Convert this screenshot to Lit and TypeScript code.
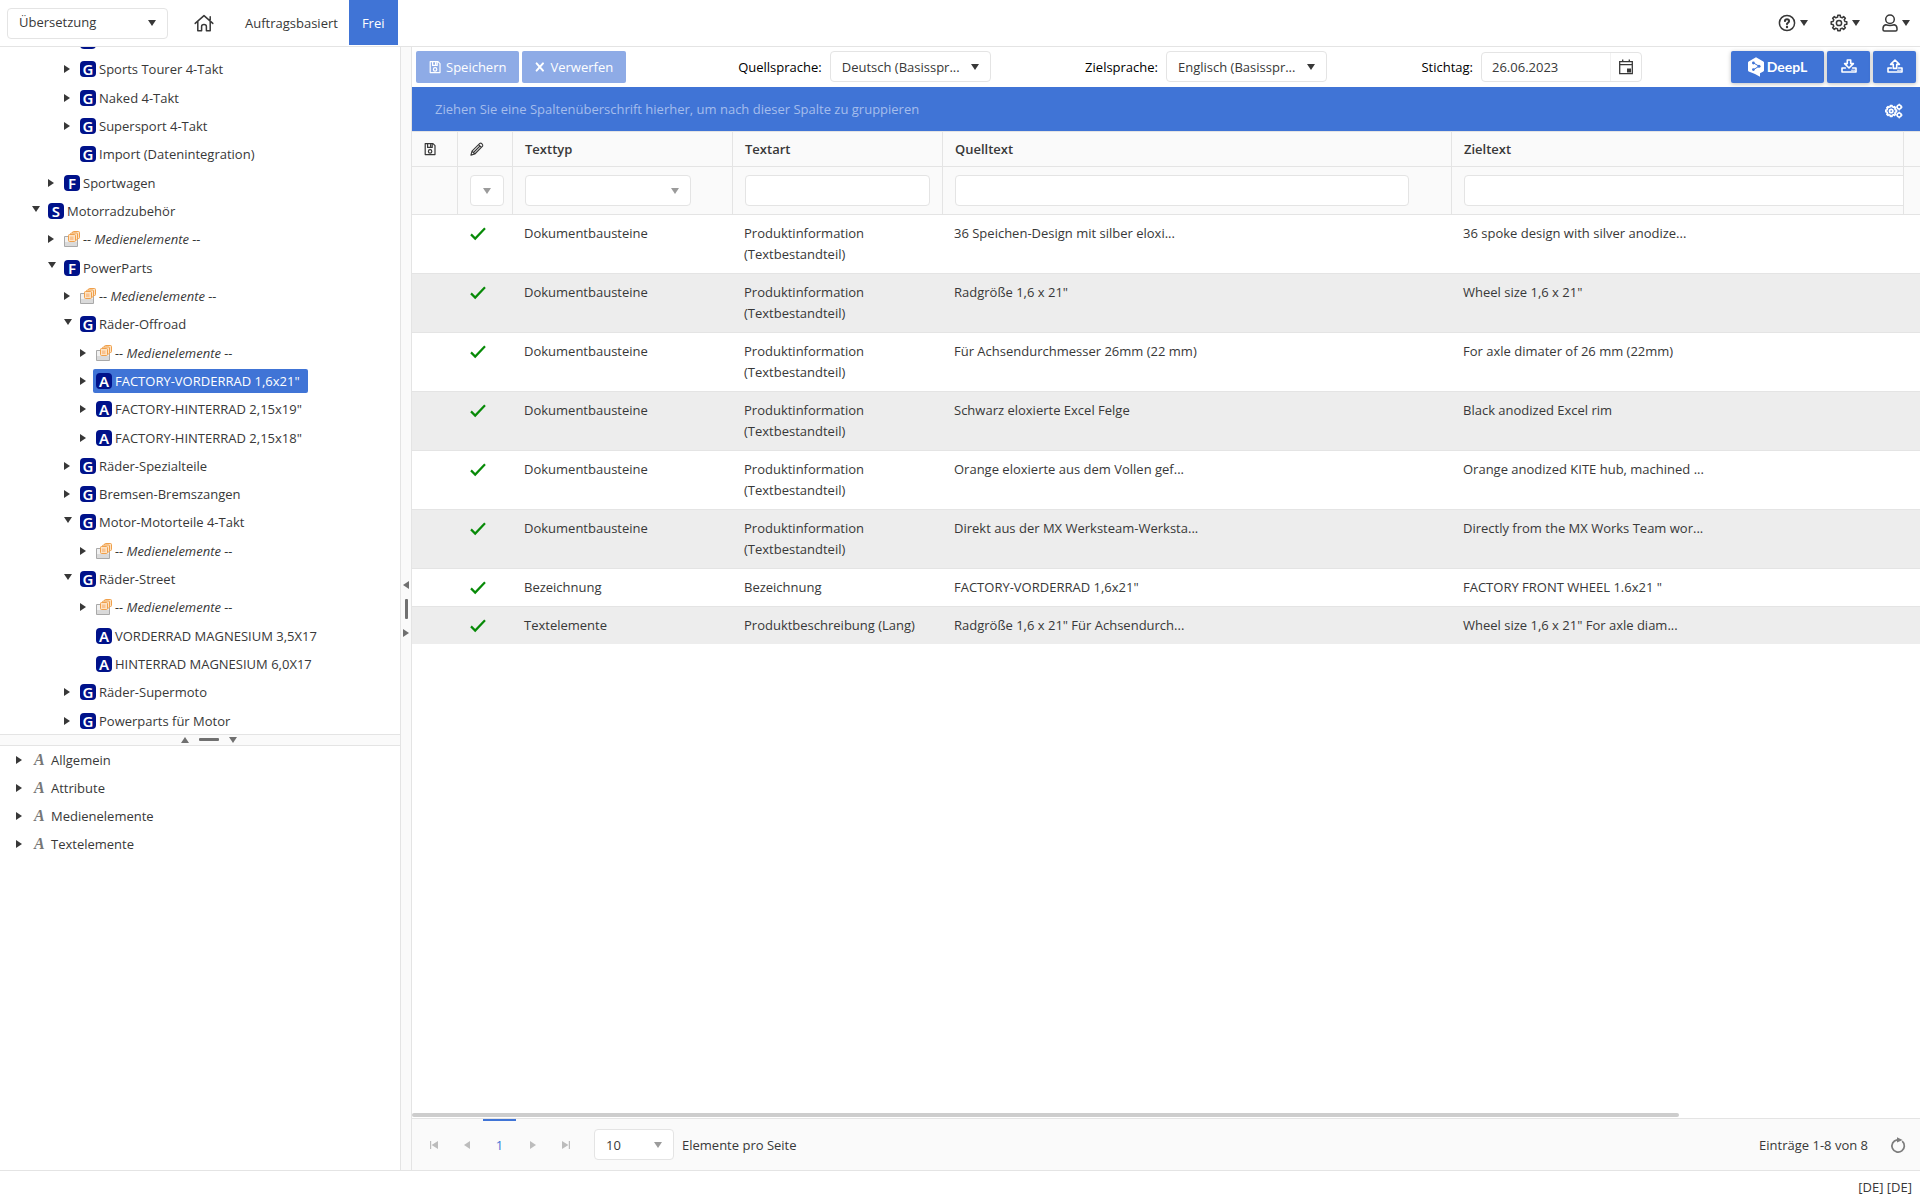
import { LitElement, html, css, svg, nothing } from 'lit';
import { customElement, property } from 'lit/decorators.js';
import { classMap } from 'lit/directives/class-map.js';
import { styleMap } from 'lit/directives/style-map.js';

type Kind = 'G' | 'F' | 'S' | 'A' | 'media' | '';
interface TreeNode {
  level: number;
  kind: Kind;
  label: string;
  open?: boolean;
  leaf?: boolean;
  selected?: boolean;
}

const MEDIA = '-- Medienelemente --';

const TREE: TreeNode[] = [
  { level: 3, kind: '', label: '', leaf: true },
  { level: 3, kind: 'G', label: 'Sports Tourer 4-Takt' },
  { level: 3, kind: 'G', label: 'Naked 4-Takt' },
  { level: 3, kind: 'G', label: 'Supersport 4-Takt' },
  { level: 3, kind: 'G', label: 'Import (Datenintegration)', leaf: true },
  { level: 2, kind: 'F', label: 'Sportwagen' },
  { level: 1, kind: 'S', label: 'Motorradzubehör', open: true },
  { level: 2, kind: 'media', label: MEDIA },
  { level: 2, kind: 'F', label: 'PowerParts', open: true },
  { level: 3, kind: 'media', label: MEDIA },
  { level: 3, kind: 'G', label: 'Räder-Offroad', open: true },
  { level: 4, kind: 'media', label: MEDIA },
  { level: 4, kind: 'A', label: 'FACTORY-VORDERRAD 1,6x21"', selected: true },
  { level: 4, kind: 'A', label: 'FACTORY-HINTERRAD 2,15x19"' },
  { level: 4, kind: 'A', label: 'FACTORY-HINTERRAD 2,15x18"' },
  { level: 3, kind: 'G', label: 'Räder-Spezialteile' },
  { level: 3, kind: 'G', label: 'Bremsen-Bremszangen' },
  { level: 3, kind: 'G', label: 'Motor-Motorteile 4-Takt', open: true },
  { level: 4, kind: 'media', label: MEDIA },
  { level: 3, kind: 'G', label: 'Räder-Street', open: true },
  { level: 4, kind: 'media', label: MEDIA },
  { level: 4, kind: 'A', label: 'VORDERRAD MAGNESIUM 3,5X17', leaf: true },
  { level: 4, kind: 'A', label: 'HINTERRAD MAGNESIUM 6,0X17', leaf: true },
  { level: 3, kind: 'G', label: 'Räder-Supermoto' },
  { level: 3, kind: 'G', label: 'Powerparts für Motor' },
];

const SECTIONS = ['Allgemein', 'Attribute', 'Medienelemente', 'Textelemente'];

const DOC = 'Dokumentbausteine';
const INFO = 'Produktinformation (Textbestandteil)';
const ROWS: [string, string, string, string][] = [
  [DOC, INFO, '36 Speichen-Design mit silber eloxi...', '36 spoke design with silver anodize...'],
  [DOC, INFO, 'Radgröße 1,6 x 21"', 'Wheel size 1,6 x 21"'],
  [DOC, INFO, 'Für Achsendurchmesser 26mm (22 mm)', 'For axle dimater of 26 mm (22mm)'],
  [DOC, INFO, 'Schwarz eloxierte Excel Felge', 'Black anodized Excel rim'],
  [DOC, INFO, 'Orange eloxierte aus dem Vollen gef...', 'Orange anodized KITE hub, machined ...'],
  [DOC, INFO, 'Direkt aus der MX Werksteam-Werksta...', 'Directly from the MX Works Team wor...'],
  ['Bezeichnung', 'Bezeichnung', 'FACTORY-VORDERRAD 1,6x21"', 'FACTORY FRONT WHEEL 1.6x21 "'],
  ['Textelemente', 'Produktbeschreibung (Lang)', 'Radgröße 1,6 x 21" Für Achsendurch...', 'Wheel size 1,6 x 21" For axle diam...'],
];

function gearPath(cx: number, cy: number, outer: number, inner: number, teeth: number) {
  const pts: string[] = [];
  const step = (Math.PI * 2) / teeth;
  for (let i = 0; i < teeth; i++) {
    const a = i * step;
    const put = (ang: number, r: number) =>
      pts.push(`${(cx + Math.sin(ang) * r).toFixed(2)} ${(cy - Math.cos(ang) * r).toFixed(2)}`);
    put(a - step * 0.3, inner);
    put(a - step * 0.2, outer);
    put(a + step * 0.2, outer);
    put(a + step * 0.3, inner);
  }
  return `M${pts.join('L')}Z`;
}

const line = (w: number, body: unknown) =>
  svg`<g fill="none" stroke="currentColor" stroke-width=${w} stroke-linejoin="round" stroke-linecap="round">${body}</g>`;

const ICONS: Record<string, { w: number; h: number; body: unknown }> = {
  home: {
    w: 20, h: 18,
    body: line(1.5, svg`<path d="M1.2 9.4 10 1.6l8.800 7.800M3.800 7.600v9.200h3.800v-4.200q0-2.100 2.400-2.100t2.400 2.100v4.200h3.800V7.600M16.200 6V2.800"/>`),
  },
  help: {
    w: 18, h: 18,
    body: svg`${line(1.5, svg`<circle cx="9" cy="9" r="7.600"/>`)}${line(2, svg`<path d="M6.900 7.100Q7 5.200 9 5.200t2.100 1.800Q11.100 8.200 9.900 8.800T9 10.200"/>`)}<circle cx="9" cy="13" r="1.200" fill="currentColor"/>`,
  },
  gear: {
    w: 18, h: 18,
    body: line(1.5, svg`<path d=${gearPath(9, 9, 7.9, 6.1, 8)}/><circle cx="9" cy="9" r="2.600"/>`),
  },
  user: {
    w: 16, h: 18,
    body: line(1.5, svg`<circle cx="8" cy="5.300" r="4.300"/><path d="M3.800 10.800Q1 11.400 1 14.600V15.800Q1 17 2.400 17H13.600Q15 17 15 15.800V14.600Q15 11.400 12.200 10.800Q8 12.200 3.800 10.800Z"/>`),
  },
  save: {
    w: 12, h: 14,
    body: line(1.2, svg`<path d="M1.200 1.600H9L11 3.600V12.600H1.200Z"/><path d="M3.600 1.600V5.400H8.200V1.600M6.600 2.600V4.200"/><circle cx="6.100" cy="9.400" r="1.700"/>`),
  },
  close: { w: 10, h: 10, body: line(2, svg`<path d="M1.600 1.400 8 8.600M8 1.400 1.600 8.600"/>`) },
  pencil: {
    w: 14, h: 14,
    body: line(1.1, svg`<path d="M.9 13.100 2 9.200 9.800 1.400Q10.800.600 12 1.800T12.600 4.200L4.800 12ZM2 9.200 4.800 12M8.600 2.600 11.400 5.400M4 10 10 4"/>`),
  },
  check: {
    w: 16, h: 13,
    body: svg`<path d="M1 7.400 5.200 11.600 15 1.200" fill="none" stroke="currentColor" stroke-width="2.200"/>`,
  },
  calendar: {
    w: 16, h: 16,
    body: svg`<path d="M1.700 2.700H14.300V14.700H1.700ZM1.700 5.700H14.300M4.700.500V3M11.300.500V3" fill="none" stroke="currentColor" stroke-width="1.300"/><path d="M9 9.500h4v4H9z" fill="currentColor"/>`,
  },
  download: {
    w: 16, h: 14,
    body: line(1.6, svg`<path d="M6.300 1H9.700V4.600H12.400L8 9 3.600 4.600H6.300ZM4.400 9H1V13H15V9H11.600M11 11.200h.1M13 11.200h.1"/>`),
  },
  upload: {
    w: 16, h: 14,
    body: line(1.6, svg`<path d="M6.300 9.400H9.700V5.400H12.400L8 1 3.600 5.400H6.300ZM4.400 9H1V13H15V9H11.600M11 11.200h.1M13 11.200h.1"/>`),
  },
  gears: {
    w: 18, h: 16,
    body: svg`${line(1.7, svg`<path d=${gearPath(6.2, 8, 5.4, 4.3, 8)}/><circle cx="6.200" cy="8" r="1.700"/>`)}${line(1.6, svg`<circle cx="14.200" cy="4" r="2"/><circle cx="14.200" cy="12" r="2"/>`)}${line(1.2, svg`<path d="M14.200 1v1M14.200 6v1M11.200 4h1M16.200 4h1M14.200 9v1M14.200 14v1M11.200 12h1M16.200 12h1"/>`)}`,
  },
  deepl: {
    w: 16, h: 20,
    body: svg`<path d="M8 .300 15.300 4.400Q16 4.800 16 5.600V13.200Q16 14 15.300 14.400L12 16.300V19.800L7 17 .700 14.400Q0 14 0 13.200V5.600Q0 4.800.700 4.400Z" fill="#fff"/><path d="M5.600 6 11 9.200 5.600 12.600" fill="none" stroke="#4074d6" stroke-width="1"/><g fill="#4074d6"><circle cx="5.400" cy="6" r="1.400"/><circle cx="11" cy="9.200" r="1.500"/><circle cx="5.400" cy="12.600" r="1.400"/></g>`,
  },
  refresh: {
    w: 16, h: 16,
    body: svg`<path d="M12.200 4.200A6.200 6.200 0 1 1 7 2.800" fill="none" stroke="currentColor" stroke-width="1.700"/><path d="M7 .200 12.600 2.900 7 5.600Z" fill="currentColor"/>`,
  },
  first: { w: 8, h: 8, body: svg`<path d="M0 0H1.200V8H0ZM8 0V8L1.600 4Z" fill="currentColor"/>` },
  last: { w: 8, h: 8, body: svg`<path d="M6.800 0H8V8H6.800ZM0 0V8L6.400 4Z" fill="currentColor"/>` },
  left: { w: 6, h: 8, body: svg`<path d="M6 0V8L0 4Z" fill="currentColor"/>` },
  right: { w: 6, h: 8, body: svg`<path d="M0 0V8L6 4Z" fill="currentColor"/>` },
  up: { w: 8, h: 6, body: svg`<path d="M0 6H8L4 0Z" fill="currentColor"/>` },
  down: { w: 8, h: 6, body: svg`<path d="M0 0H8L4 6Z" fill="currentColor"/>` },
  media: {
    w: 16, h: 16,
    body: svg`<path d="M.5 5.500H13.500V15.500H.5Z" fill="#f1f1f1" stroke="#a9a9a9"/><path d="M1 11h12v4H1z" fill="#dadada"/><g stroke="#f0a04b" fill="#fde3c4"><rect x="8.500" y=".5" width="7" height="7" rx="1"/><rect x="6.500" y="2" width="7" height="7" rx="1"/><rect x="4.500" y="3.500" width="7" height="7" rx="1"/></g><path d="M6 5.500h3.500v3.500H6z" fill="#f9c391"/>`,
  },
};

@customElement('ui-icon')
class UiIcon extends LitElement {
  @property() name = '';
  static styles = css`
    :host { display: inline-flex; flex: none; }
    svg { display: block; overflow: visible; }
  `;
  render() {
    const i = ICONS[this.name];
    return i
      ? html`<svg width=${i.w} height=${i.h} viewBox="0 0 ${i.w} ${i.h}" aria-hidden="true">${i.body}</svg>`
      : nothing;
  }
}

@customElement('app-root')
class AppRoot extends LitElement {
  static styles = css`
    :host {
      display: block;
      color: #383838;
      font: 13px/20px 'Open Sans', 'Noto Sans', sans-serif;
      --blue: #4074d6;
      --line: #e4e4e4;
      --soft: #fafafa;
    }
    * { box-sizing: border-box; }
    button, select, input { font: inherit; color: inherit; margin: 0; }
    button { border: 0; padding: 0; background: none; display: inline-flex; align-items: center; justify-content: center; }
    ul { list-style: none; margin: 0; padding: 0; }
    .app { display: grid; grid-template-rows: 46px 1fr 29px; height: 100vh; background: #fff; overflow: hidden; }

    .top { display: flex; align-items: center; padding: 0 10px 0 7px; }
    .top > .drop select { padding-bottom: 2px; }
    .tabs { display: flex; align-self: stretch; align-items: center; margin-left: 26px; height: 45px; }
    .tabs a { color: inherit; text-decoration: none; display: flex; align-items: center; height: 45px; }
    .tabs .link { padding: 0 11px 0 31px; }
    .tabs .active { background: var(--blue); color: #fff; padding: 0 13px; }
    .tools { display: flex; gap: 22px; margin-left: auto; }
    .tools button { gap: 4px; height: 30px; }

    .drop { display: inline-grid; align-items: center; }
    .drop > * { grid-area: 1 / 1; }
    .drop select { appearance: none; border: 1px solid var(--line); border-radius: 4px; background: #fff; height: 31px; width: 100%; padding: 0 28px 0 11px; }
    .drop ui-icon { justify-self: end; margin-right: 12px; pointer-events: none; }
    .wide { width: 161px; }
    .grey ui-icon { color: #9b9b9b; }

    .body { display: grid; grid-template-columns: 400px 12px minmax(0, 1fr); min-height: 0; border: solid var(--line); border-width: 1px 0; }
    .side { display: grid; grid-template-rows: minmax(0, 34fr) 12px minmax(0, 21fr); min-height: 0; }
    .split { background: var(--soft); color: #707070; display: flex; align-items: center; justify-content: center; border: solid var(--line); }
    .split.col { flex-direction: column; gap: 10px; border-width: 0 1px; }
    .split.row { gap: 10px; border-width: 1px 0; padding-left: 18px; }
    .grip { border-radius: 1px; background: #707070; }
    .split.col .grip { width: 3px; height: 20px; }
    .split.row .grip { width: 20px; height: 3px; }

    .treebox { overflow: hidden; }
    .tree { display: grid; grid-auto-rows: 1fr; height: calc(100% + 21px); margin-top: -20px; }
    .node { display: flex; align-items: center; }
    .toggle { width: 16px; height: 20px; flex: none; justify-content: flex-start; }
    .toggle.open { padding-bottom: 5px; }
    .item { display: flex; align-items: center; gap: 3px; height: 24px; padding: 0 8px 0 3px; margin-left: -3px; border-radius: 2px; }
    .item.selected { background: var(--blue); color: #fff; }
    .badge { width: 16px; height: 16px; border-radius: 4px; background: #00128a; color: #fff; font: 600 15px/16px 'Noto Sans', sans-serif; text-align: center; }
    .media { font-style: italic; }
    .attrs .node { height: 28px; padding-left: 16px; }
    .attrs .toggle { width: 18px; }
    .glyph { font: italic bold 16px/16px 'Liberation Serif', serif; color: #777; width: 14px; }

    .main { display: grid; grid-template-rows: 40px 44px minmax(0, 1fr) 5px 52px; min-width: 0; min-height: 0; }
    .bar { display: flex; padding: 4px 4px 0; gap: 3px; align-items: flex-start; }
    .btn { height: 32px; background: var(--blue); color: #fff; border-radius: 2px; gap: 5px; box-shadow: 0 1px 4px rgba(0, 0, 0, 0.25); }
    .btn.off { background: #8eabe6; box-shadow: none; padding: 0 13px; }
    .btn.sq { width: 43px; padding-bottom: 2px; }
    .btn.deepl { width: 93px; font: 700 14px/20px Lato, sans-serif; gap: 3px; }
    .fields { flex: 1; display: flex; justify-content: space-between; padding: 0 86px 0 109px; color: #000; }
    .field { display: flex; align-items: center; gap: 8px; }
    .field .drop, .date { color: #383838; }
    .date { display: flex; width: 161px; height: 30px; border: 1px solid var(--line); border-radius: 4px; }
    .date input { flex: 1; min-width: 0; border: 0; background: none; padding: 0 10px; outline: 0; }
    .date button { width: 31px; border-left: 1px solid #f2f2f2; }

    .group { background: var(--blue); color: #a5bdec; display: flex; align-items: center; justify-content: space-between; padding: 0 17px 0 23px; }
    .group button { color: #fff; margin-top: 4px; }
    .gridbox { overflow: hidden; }
    table { width: 100%; table-layout: fixed; border-collapse: separate; border-spacing: 0; }
    th { text-align: left; font-weight: 600; height: 36px; padding: 0 12px; background: var(--soft); border: solid var(--line); border-width: 1px 1px 1px 0; }
    th.gut, .filter th:last-child { border-right: 0; }
    .filter th { height: 48px; border-top: 0; overflow: hidden; padding-right: 0; font-weight: 400; }
    .filter input { width: 454px; height: 31px; border: 1px solid var(--line); border-radius: 4px; background: #fff; padding: 0 10px; display: block; }
    .filter .w-icon { width: 34px; }
    .filter .w-icon select { padding: 0; }
    .filter .w-type { width: 166px; }
    .filter .w-art { width: 185px; }
    .filter .w-full { width: calc(100% + 20px); }
    .w-icon ui-icon { margin-right: 13px; }
    th ui-icon, td ui-icon { display: flex; }
    .filter .drop { display: grid; }
    td { vertical-align: top; padding: 8px 11px; line-height: 21px; border-top: 1px solid var(--line); }
    tr:first-child td { border-top: 0; }
    tbody tr:nth-child(even) td { background: #ededed; }
    .ok { color: #078a07; padding: 12px 12px 0; }

    .scroll { display: flex; }
    .thumb { height: 4px; width: 84%; background: #cdcdcd; border-radius: 2px; }
    .pager { background: var(--soft); border-top: 1px solid var(--line); display: flex; align-items: center; padding: 0 14px 0 5px; }
    .pages { display: flex; align-self: stretch; }
    .pages button { width: 33px; color: #bcbcbc; }
    .pages .current { color: var(--blue); border-top: 2px solid var(--blue); padding-bottom: 2px; }
    .size { width: 80px; margin: 0 8px 0 12px; }
    .pager .label { margin-right: auto; }
    .pager .count { margin-right: 22px; }
    .pager .reload { color: #7c7c7c; }
    .foot { display: flex; justify-content: flex-end; align-items: center; padding: 2px 8px 0 0; }
  `;

  drop(options: string[], cls: string, label: string, id?: string) {
    return html`<span class="drop ${cls}">
      <select id=${id ?? nothing} aria-label=${label}>${options.map((o) => html`<option>${o}</option>`)}</select>
      <ui-icon name="down"></ui-icon>
    </span>`;
  }

  node(n: TreeNode) {
    const open = !!n.open;
    return html`<li class="node" role="treeitem" style=${styleMap({ paddingLeft: `${(n.level + 1) * 16}px` })}>
      <button class=${classMap({ toggle: true, open })} aria-label="Umschalten" ?disabled=${!!n.leaf}>
        ${n.leaf ? nothing : html`<ui-icon name=${open ? 'down' : 'right'}></ui-icon>`}
      </button>
      <span class=${classMap({ item: true, selected: !!n.selected, media: n.kind === 'media' })}>
        ${n.kind === 'media' ? html`<ui-icon name="media"></ui-icon>` : html`<span class="badge">${n.kind}</span>`}
        <span>${n.label}</span>
      </span>
    </li>`;
  }

  render() {
    return html`<div class="app">
      <header class="top">
        ${this.drop(['Übersetzung'], 'wide', 'Modul')}
        <nav class="tabs">
          <a href="#home" aria-label="Startseite"><ui-icon name="home"></ui-icon></a>
          <a class="link" href="#auftrag">Auftragsbasiert</a>
          <a class="active" href="#frei">Frei</a>
        </nav>
        <div class="tools">
          ${[['help', 'Hilfe'], ['gear', 'Einstellungen'], ['user', 'Benutzer']].map(
            ([i, l]) => html`<button aria-label=${l}><ui-icon name=${i}></ui-icon><ui-icon name="down"></ui-icon></button>`,
          )}
        </div>
      </header>

      <div class="body">
        <aside class="side">
          <div class="treebox"><ul class="tree" role="tree">${TREE.map((n) => this.node(n))}</ul></div>
          <div class="split row"><ui-icon name="up"></ui-icon><span class="grip"></span><ui-icon name="down"></ui-icon></div>
          <ul class="attrs">
            ${SECTIONS.map(
              (s) => html`<li class="node">
                <button class="toggle" aria-label="Umschalten"><ui-icon name="right"></ui-icon></button>
                <span class="item"><span class="glyph">A</span><span>${s}</span></span>
              </li>`,
            )}
          </ul>
        </aside>
        <div class="split col"><ui-icon name="left"></ui-icon><span class="grip"></span><ui-icon name="right"></ui-icon></div>

        <main class="main">
          <div class="bar">
            <button class="btn off"><ui-icon name="save"></ui-icon>Speichern</button>
            <button class="btn off"><ui-icon name="close"></ui-icon>Verwerfen</button>
            <div class="fields">
              <div class="field"><label for="src">Quellsprache:</label>${this.drop(['Deutsch (Basisspr...'], 'wide', 'Quellsprache', 'src')}</div>
              <div class="field"><label for="dst">Zielsprache:</label>${this.drop(['Englisch (Basisspr...'], 'wide', 'Zielsprache', 'dst')}</div>
              <div class="field"><label for="day">Stichtag:</label>
                <span class="date"><input id="day" .value=${'26.06.2023'} /><button aria-label="Kalender"><ui-icon name="calendar"></ui-icon></button></span>
              </div>
            </div>
            <button class="btn deepl"><ui-icon name="deepl"></ui-icon>DeepL</button>
            <button class="btn sq" aria-label="Importieren"><ui-icon name="download"></ui-icon></button>
            <button class="btn sq" aria-label="Exportieren"><ui-icon name="upload"></ui-icon></button>
          </div>
          <div class="group">
            <span>Ziehen Sie eine Spaltenüberschrift hierher, um nach dieser Spalte zu gruppieren</span>
            <button aria-label="Spalten"><ui-icon name="gears"></ui-icon></button>
          </div>
          <div class="gridbox">
            <table>
              <colgroup>
                <col width="46" /><col width="55" /><col width="220" /><col width="210" /><col width="509" /><col /><col width="16" />
              </colgroup>
              <thead>
                <tr>
                  <th><ui-icon name="save"></ui-icon></th>
                  <th><ui-icon name="pencil"></ui-icon></th>
                  <th>Texttyp</th><th>Textart</th><th>Quelltext</th><th>Zieltext</th><th class="gut"></th>
                </tr>
                <tr class="filter">
                  <th></th>
                  <th>${this.drop([''], 'grey w-icon', 'Status filtern')}</th>
                  <th>${this.drop([''], 'grey w-type', 'Texttyp filtern')}</th>
                  <th><input class="w-art" aria-label="Textart filtern" /></th>
                  <th><input aria-label="Quelltext filtern" /></th>
                  <th><input class="w-full" aria-label="Zieltext filtern" /></th>
                  <th></th>
                </tr>
              </thead>
              <tbody>
                ${ROWS.map(
                  ([a, b, c, d]) => html`<tr>
                    <td></td><td class="ok"><ui-icon name="check"></ui-icon></td>
                    <td>${a}</td><td>${b}</td><td>${c}</td><td colspan="2">${d}</td>
                  </tr>`,
                )}
              </tbody>
            </table>
          </div>
          <div class="scroll"><div class="thumb"></div></div>
          <div class="pager">
            <div class="pages">
              <button aria-label="Erste Seite"><ui-icon name="first"></ui-icon></button>
              <button aria-label="Vorige Seite"><ui-icon name="left"></ui-icon></button>
              <button class="current">1</button>
              <button aria-label="Nächste Seite"><ui-icon name="right"></ui-icon></button>
              <button aria-label="Letzte Seite"><ui-icon name="last"></ui-icon></button>
            </div>
            ${this.drop(['10'], 'grey size', 'Elemente pro Seite', 'size')}
            <label class="label" for="size">Elemente pro Seite</label>
            <span class="count">Einträge 1-8 von 8</span>
            <button class="reload" aria-label="Aktualisieren"><ui-icon name="refresh"></ui-icon></button>
          </div>
        </main>
      </div>
      <footer class="foot">[DE] [DE]</footer>
    </div>`;
  }
}
